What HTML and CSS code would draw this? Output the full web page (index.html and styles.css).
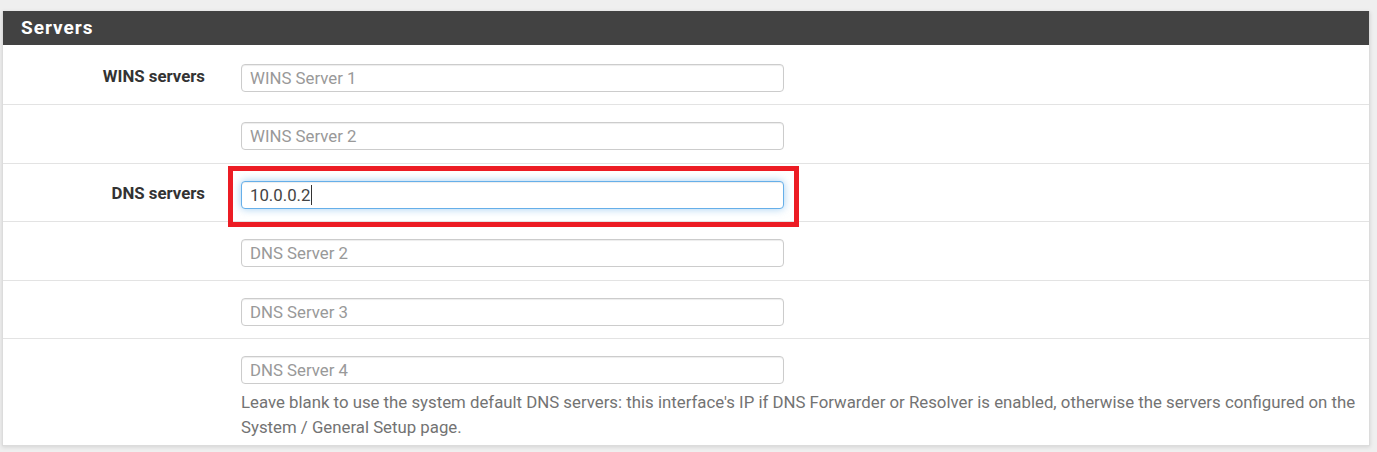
FILE: index.html
```html
<!DOCTYPE html>
<html lang="en">
<head>
<meta charset="utf-8">
<title>Servers</title>
<link rel="stylesheet" href="styles.css">
</head>
<body>
<div class="panel">
  <div class="panel-heading"><h2 class="panel-title">Servers</h2></div>
  <div class="panel-body">
    <div class="form-group">
      <label class="control-label">WINS servers</label>
      <div class="field"><input class="form-control" type="text" placeholder="WINS Server 1"></div>
    </div>
    <div class="form-group">
      <span class="control-label"></span>
      <div class="field"><input class="form-control" type="text" placeholder="WINS Server 2"></div>
    </div>
    <div class="form-group">
      <label class="control-label">DNS servers</label>
      <div class="field">
        <div class="highlight">
          <div class="form-control focused">10.0.0.2<span class="caret"></span></div>
        </div>
      </div>
    </div>
    <div class="form-group">
      <span class="control-label"></span>
      <div class="field"><input class="form-control" type="text" placeholder="DNS Server 2"></div>
    </div>
    <div class="form-group">
      <span class="control-label"></span>
      <div class="field"><input class="form-control" type="text" placeholder="DNS Server 3"></div>
    </div>
    <div class="form-group last">
      <span class="control-label"></span>
      <div class="field">
        <input class="form-control" type="text" placeholder="DNS Server 4">
        <p class="help-block">Leave blank to use the system default DNS servers: this interface's IP if DNS Forwarder or Resolver is enabled, otherwise the servers configured on the System / General Setup page.</p>
      </div>
    </div>
  </div>
</div>
</body>
</html>
```

FILE: styles.css
```css
html, body {
  margin: 0;
  padding: 0;
}
body {
  background: #efefef;
  font-family: Roboto, "Liberation Sans", Arial, sans-serif;
  color: #333;
  height: 452px;
  overflow: hidden;
}
.panel {
  margin: 11px 7px 0 2px;
  background: #fff;
  border: 1px solid #dcdcdc;
  border-top: 0;
  box-shadow: 0 1px 4px rgba(0, 0, 0, 0.12);
}
.panel-heading {
  background: #424242;
  height: 34px;
  display: flex;
  align-items: center;
  padding-left: 18px;
}
.panel-title {
  margin: 0;
  color: #fff;
  font-size: 19px;
  font-weight: 700;
  letter-spacing: 1px;
  line-height: 34px;
}
.form-group {
  display: grid;
  grid-template-columns: 238px 1fr;
  padding: 17px 0 12.5px;
  border-bottom: 1px solid #e3e3e3;
}
.form-group:first-child {
  padding-top: 18.5px;
}
.form-group.last {
  border-bottom: 0;
  padding-bottom: 5px;
}
.control-label {
  font-weight: 700;
  font-size: 16.8px;
  line-height: 20px;
  text-align: right;
  padding: 2.5px 36px 0 0;
  color: #333;
}
.field {
  padding-right: 12px;
  min-width: 0;
}
.form-control {
  box-sizing: border-box;
  display: block;
  width: 543px;
  height: 28px;
  margin: 0;
  padding: 0 8px;
  border: 1px solid #ccc;
  border-radius: 4px;
  background: #fff;
  font-family: Roboto, "Liberation Sans", Arial, sans-serif;
  font-size: 16.8px;
  color: #555;
  line-height: 26px;
  box-shadow: inset 0 1px 1px rgba(0, 0, 0, 0.075);
  outline: none;
}
.form-control::placeholder {
  color: #999;
  opacity: 1;
}
.form-control.focused {
  border-color: #66afe9;
  color: #444;
  box-shadow: inset 0 1px 1px rgba(0, 0, 0, 0.075), 0 0 8px rgba(102, 175, 233, 0.6);
}
.caret {
  display: inline-block;
  width: 1px;
  height: 20px;
  background: #333;
  vertical-align: -4px;
  margin-left: 1px;
}
.highlight {
  position: relative;
  width: 543px;
}
.highlight::after {
  content: "";
  position: absolute;
  top: -15px;
  left: -13px;
  right: -15px;
  bottom: -18px;
  border: 5px solid #ec1c24;
  pointer-events: none;
}
.help-block {
  margin: 6px 0 0;
  font-size: 16.8px;
  line-height: 25px;
  color: #737373;
}
```
